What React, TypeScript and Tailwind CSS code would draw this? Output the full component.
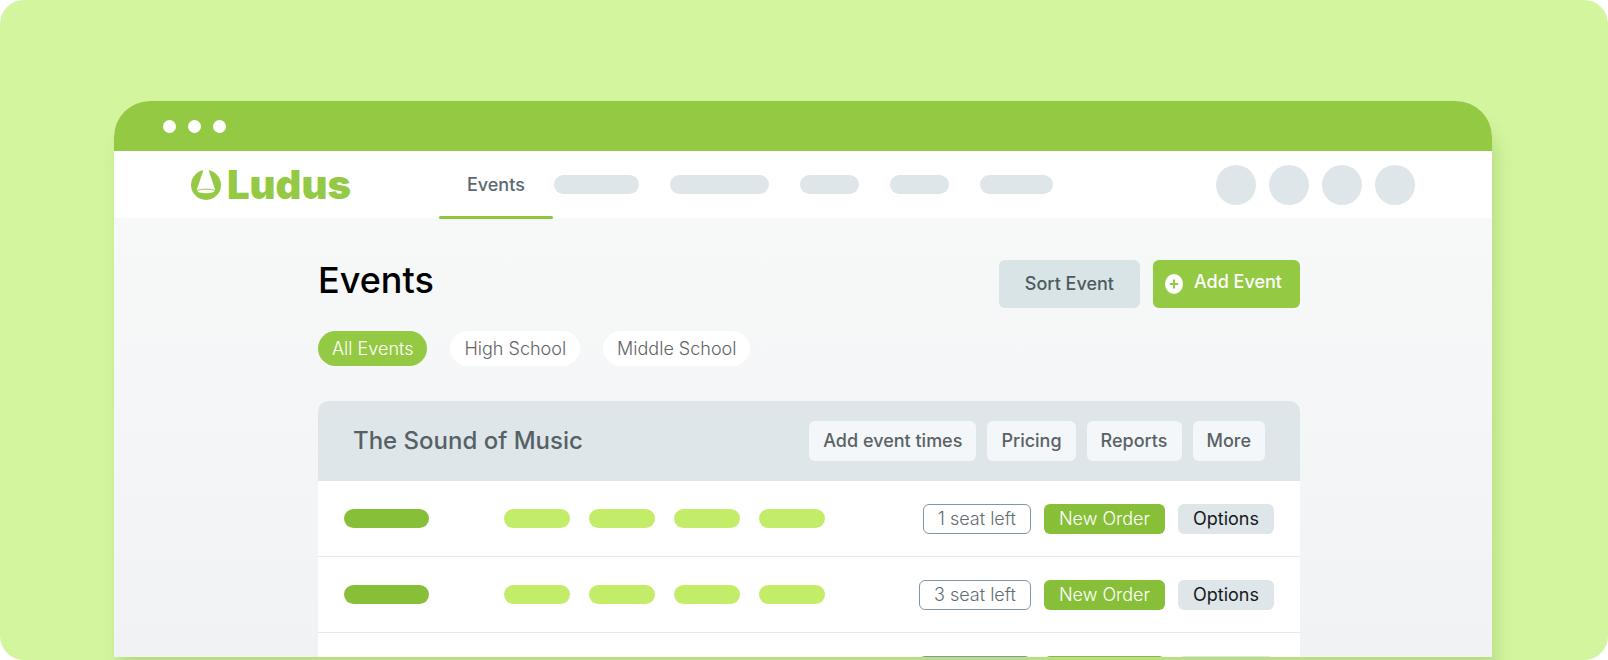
import React, { useState } from 'react';

interface EventRow {
  id: number;
  seats: string;
}

const filters = ['All Events', 'High School', 'Middle School'];

const actions = ['Add event times', 'Pricing', 'Reports', 'More'];

const rows: EventRow[] = [
  { id: 1, seats: '1 seat left' },
  { id: 2, seats: '3 seat left' },
  { id: 3, seats: '3 seat left' }
];

const navPlaceholders = ['w-[85px]', 'w-[99px]', 'w-[59px]', 'w-[59px]', 'w-[73px]'];

function Logo() {
  return (
    <a href="#home" className="flex items-center gap-[6px] text-[#94c943]">
      <svg className="w-[30px] h-[30px]" viewBox="0 0 90 90">
        <circle cx="45" cy="45" r="45" fill="currentColor" />
        <path d="M38 -2 H52 L72 58 C75 66 60 70 45 70 C30 70 15 66 18 58 Z" fill="#fff" />
        <path d="M17 62 C28 56 62 56 73 62" fill="none" stroke="currentColor" strokeWidth="3" />
      </svg>
      <span className="text-[40px] leading-[40px] font-black">Ludus</span>
    </a>
  );
}

function Header() {
  return (
    <header className="flex h-[67px] shrink-0 items-center justify-between bg-white px-[77px]">
      <div className="flex h-full items-center">
        <Logo />
        <nav className="ml-[88px] flex h-full items-center">
          <a href="#events" className="relative flex h-full items-center px-7 text-lg font-medium text-[#5b696f]">
            Events
            <span className="absolute inset-x-0 -bottom-px h-[3px] rounded-full bg-[#8cc63f]" />
          </a>
          <div className="ml-px flex items-center gap-[31px]">
            {navPlaceholders.map((width, index) => (
              <span key={index} className={`h-[19px] rounded-full bg-[#dfe6e9] ${width}`} />
            ))}
          </div>
        </nav>
      </div>
      <div className="flex items-center gap-[13px]">
        {[0, 1, 2, 3].map((item) => (
          <span key={item} className="size-10 rounded-full bg-[#dfe6e9]" />
        ))}
      </div>
    </header>
  );
}

function EventCard() {
  return (
    <section className="rounded-t-[10px] bg-white">
      <div className="flex h-20 items-center justify-between rounded-t-[10px] bg-[#dfe6e9] px-[35px]">
        <h2 className="text-2xl font-medium text-[#566166]">The Sound of Music</h2>
        <div className="flex gap-[11px]">
          {actions.map((action) => (
            <button key={action} className="h-10 rounded-md bg-[#f4f7f9] px-[14px] text-lg font-medium text-[#5a6266]">
              {action}
            </button>
          ))}
        </div>
      </div>
      <ul>
        {rows.map((row) => (
          <li key={row.id} className="flex h-[76px] items-center justify-between border-b border-[#e6e9eb] px-[26px]">
            <div className="flex items-center">
              <span className="mr-[75px] h-[19px] w-[85px] rounded-full bg-[#87c038]" />
              <div className="flex gap-[19px]">
                {[0, 1, 2, 3].map((item) => (
                  <span key={item} className="h-[19px] w-[66px] rounded-full bg-[#c3ec69]" />
                ))}
              </div>
            </div>
            <div className="flex gap-[13px] text-lg font-light">
              <span className="flex h-[30px] items-center rounded-md border border-[#8197a3] px-[14px] text-[#626d72]">
                {row.seats}
              </span>
              <button className="h-[30px] rounded-md bg-[#87c038] px-[15px] text-white">New Order</button>
              <button className="h-[30px] rounded-md bg-[#dfe6e9] px-[15px] font-normal text-[#14191c]">Options</button>
            </div>
          </li>
        ))}
      </ul>
    </section>
  );
}

export default function App() {
  const [activeFilter, setActiveFilter] = useState('All Events');

  return (
    <div className="h-screen bg-white font-['Inter','Liberation_Sans',sans-serif]">
      <div className="flex h-full flex-col overflow-hidden rounded-3xl bg-[#d2f59e] pt-[101px] pr-[116px] pb-[3px] pl-[114px]">
        <div className="flex min-h-0 flex-1 flex-col overflow-hidden rounded-t-[36px] bg-[#f8f9f9] shadow-[5px_20px_16px_rgba(90,130,40,0.2)]">
          <div className="flex h-[50px] shrink-0 items-center gap-3 bg-[#94c943] px-[49px]">
            <span className="size-[13px] rounded-full bg-white" />
            <span className="size-[13px] rounded-full bg-white" />
            <span className="size-[13px] rounded-full bg-white" />
          </div>
          <Header />
          <main className="min-h-0 flex-1 bg-linear-to-b from-[#f7f9f9] to-[#f0f2f4] pt-[42px] pr-48 pl-[204px]">
            <div className="flex items-start justify-between">
              <h1 className="text-4xl font-medium text-black">Events</h1>
              <div className="flex gap-[13px]">
                <button className="h-12 rounded-md bg-[#d9e4e7] px-[26px] text-lg font-medium text-[#4f5a5f]">
                  Sort Event
                </button>
                <button className="flex h-12 items-center gap-[11px] rounded-md bg-[#94c943] px-3 pr-[18px] text-lg font-medium text-white">
                  <svg className="h-5 w-[18px]" viewBox="0 0 18 20">
                    <ellipse cx="9" cy="10" rx="9" ry="10" fill="#fff" />
                    <path d="M9 5.5v9M4.8 10h8.4" stroke="#94c943" strokeWidth="2" />
                  </svg>
                  <span className="pb-1">Add Event</span>
                </button>
              </div>
            </div>
            <div className="mt-[23px] mb-[35px] flex gap-[23px]">
              {filters.map((filter) => (
                <button
                  key={filter}
                  onClick={() => setActiveFilter(filter)}
                  className={`h-[35px] rounded-full px-[14px] text-lg font-light ${
                    activeFilter === filter ? 'bg-[#94c943] text-white' : 'bg-white text-[#5f6366]'
                  }`}
                >
                  {filter}
                </button>
              ))}
            </div>
            <EventCard />
          </main>
        </div>
      </div>
    </div>
  );
}
